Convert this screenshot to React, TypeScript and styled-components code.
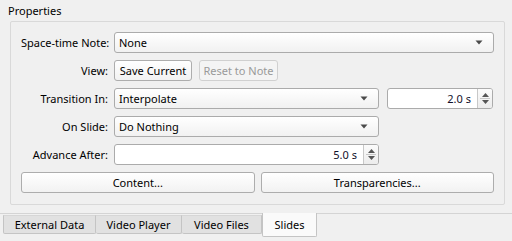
import React from 'react'
import styled, { createGlobalStyle } from 'styled-components'

const Global = createGlobalStyle`
  html, body { margin: 0; padding: 0; background: #f0f0f0; }
  body { font-family: "Noto Sans", "Open Sans", sans-serif; font-size: 11px; color: #000; }
`

const Page = styled.div`
  width: 512px;
  height: 241px;
  display: flex;
  flex-direction: column;
  overflow: hidden;
`

const Title = styled.div`
  height: 21px;
  padding-left: 8px;
  line-height: 22px;
  box-sizing: border-box;
`

const GroupBox = styled.div`
  margin-left: 10px;
  width: 495px;
  height: 184px;
  box-sizing: border-box;
  border: 1px solid #d9d9d9;
  border-radius: 2px;
  padding: 10px;
  display: grid;
  grid-template-columns: 87px 1fr;
  grid-auto-rows: 21px;
  column-gap: 6px;
  row-gap: 7px;
`

const Label = styled.div`
  text-align: right;
  line-height: 21px;
  white-space: nowrap;
`

const Field = styled.div<{ $gap?: number }>`
  display: flex;
  gap: ${p => p.$gap ?? 7}px;
`

const Combo = styled.div<{ $w?: number }>`
  box-sizing: border-box;
  width: ${p => (p.$w ? `${p.$w}px` : '100%')};
  height: 21px;
  border: 1px solid #ababab;
  border-radius: 3px;
  background: linear-gradient(#ffffff, #f1f1f1);
  display: flex;
  align-items: center;
  justify-content: space-between;
  padding: 0 10px 0 4px;
`

const Spin = styled.div<{ $w: number }>`
  box-sizing: border-box;
  width: ${p => p.$w}px;
  height: 21px;
  border: 1px solid #ababab;
  border-radius: 3px;
  background: #fff;
  display: flex;
`

const SpinValue = styled.div`
  flex: 1;
  text-align: right;
  line-height: 19px;
  padding-right: 6px;
  color: #11112a;
`

const SpinButtons = styled.div`
  width: 14px;
  border-left: 1px solid #c8c8c8;
  background: linear-gradient(#fbfbfb, #ececec);
  border-radius: 0 2px 2px 0;
  display: flex;
  flex-direction: column;
  align-items: center;
  justify-content: center;
  gap: 1px;
`

const SpinDivider = styled.div`
  width: 10px;
  height: 1px;
  background: #c8c8c8;
`

const Button = styled.div<{ $disabled?: boolean; $w?: number }>`
  box-sizing: border-box;
  width: ${p => (p.$w ? `${p.$w}px` : 'auto')};
  flex: ${p => (p.$w ? 'none' : '1')};
  height: 21px;
  border: 1px solid ${p => (p.$disabled ? '#d0d0d0' : '#adadad')};
  border-radius: 3px;
  background: ${p => (p.$disabled ? '#f4f4f4' : 'linear-gradient(#ffffff, #f2f2f2)')};
  color: ${p => (p.$disabled ? '#9a9a9a' : '#000')};
  text-align: center;
  line-height: 19px;
  white-space: nowrap;
`

const FullRow = styled.div`
  grid-column: 1 / 3;
  display: flex;
  gap: 6px;
`

const TabBar = styled.div`
  margin-top: 8px;
  border-top: 1px solid #d4d4d4;
  display: flex;
  padding-left: 3px;
  height: 27px;
  align-items: flex-start;
`

const Tab = styled.div<{ $active?: boolean; $w: number }>`
  box-sizing: border-box;
  width: ${p => p.$w}px;
  height: ${p => (p.$active ? '24px' : '19px')};
  margin-top: ${p => (p.$active ? '-1px' : '1px')};
  background: ${p => (p.$active ? '#fafafa' : '#e1e1e1')};
  border: 1px solid #c4c4c4;
  border-top: ${p => (p.$active ? 'none' : '1px solid #d6d6d6')};
  border-left: ${p => (p.$active ? '1px solid #c4c4c4' : 'none')};
  border-radius: 0 0 2px 2px;
  text-align: center;
  line-height: ${p => (p.$active ? '24px' : '17px')};
  &:first-child { border-left: 1px solid #c4c4c4; }
`

const Arrow = () => (
  <svg width="8" height="5" viewBox="0 0 8 5">
    <path d="M0.5 0.5 L7.5 0.5 L4 4.5 Z" fill="#4a4a4a" />
  </svg>
)

const UpDown = () => (
  <SpinButtons>
    <svg width="7" height="4" viewBox="0 0 7 4">
      <path d="M0 4 L7 4 L3.5 0 Z" fill="#555" />
    </svg>
    <SpinDivider />
    <svg width="7" height="4" viewBox="0 0 7 4">
      <path d="M0 0 L7 0 L3.5 4 Z" fill="#555" />
    </svg>
  </SpinButtons>
)

export default function App() {
  return (
    <Page>
      <Global />
      <Title>Properties</Title>
      <GroupBox>
        <Label>Space-time Note:</Label>
        <Combo>
          <span>None</span>
          <Arrow />
        </Combo>

        <Label>View:</Label>
        <Field>
          <Button $w={78}>Save Current</Button>
          <Button $w={79} $disabled>Reset to Note</Button>
        </Field>

        <Label>Transition In:</Label>
        <Field $gap={8}>
          <Combo $w={265}>
            <span>Interpolate</span>
            <Arrow />
          </Combo>
          <Spin $w={106}>
            <SpinValue>2.0 s</SpinValue>
            <UpDown />
          </Spin>
        </Field>

        <Label>On Slide:</Label>
        <Field>
          <Combo $w={265}>
            <span>Do Nothing</span>
            <Arrow />
          </Combo>
        </Field>

        <Label>Advance After:</Label>
        <Field>
          <Spin $w={265}>
            <SpinValue>5.0 s</SpinValue>
            <UpDown />
          </Spin>
        </Field>

        <FullRow>
          <Button>Content...</Button>
          <Button>Transparencies...</Button>
        </FullRow>
      </GroupBox>
      <TabBar>
        <Tab $w={93}>External Data</Tab>
        <Tab $w={86}>Video Player</Tab>
        <Tab $w={80}>Video Files</Tab>
        <Tab $w={55} $active>Slides</Tab>
      </TabBar>
    </Page>
  )
}
